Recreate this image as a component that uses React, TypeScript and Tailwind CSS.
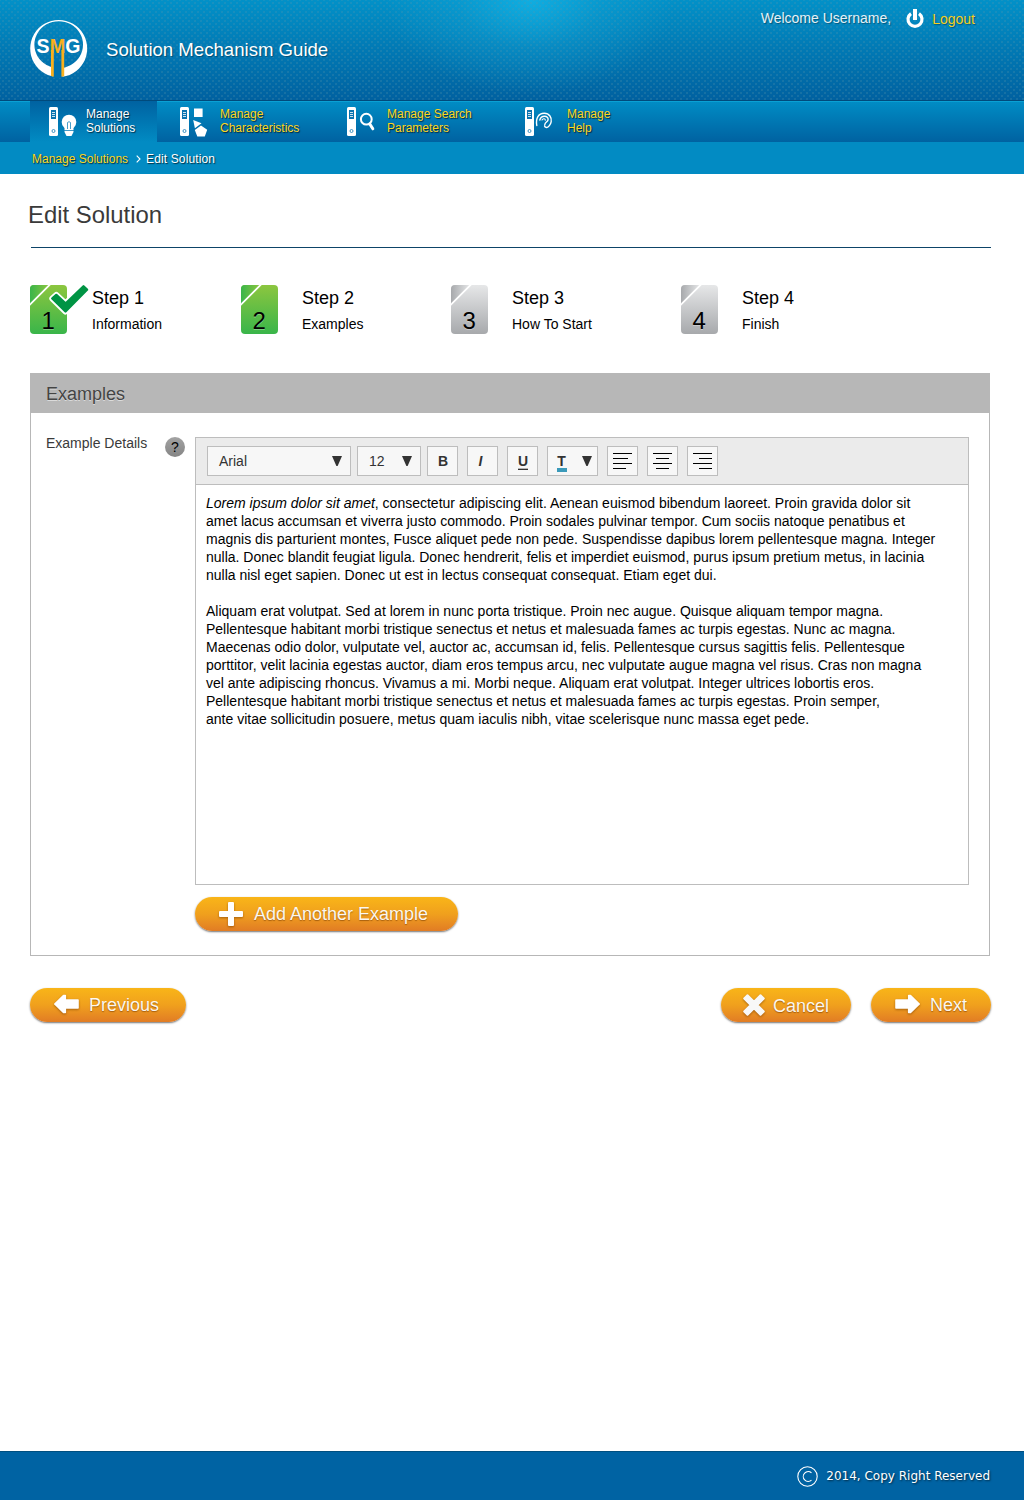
import type { ReactNode } from 'react';

const navShadow = '[text-shadow:1px_1px_1px_rgba(0,0,0,0.65)]';
const softShadow = '[text-shadow:1px_1px_1px_rgba(0,0,0,0.35)]';

function Logo() {
  return (
    <svg width="60" height="60" viewBox="29 19 60 60" className="block shrink-0">
      <path
        fill="#fff"
        fillRule="evenodd"
        d="M58.7 20a28.5 28.500 0 1 0 .01 0ZM58.7 21.2a24.300 23.500 0 1 1-.01 0Z"
      />
      <path fill="#0070ae" d="M53 62h9.500v16H53z" />
      <g fontFamily="Liberation Sans, Arial, sans-serif" fontWeight="700" fontSize="19.5">
        <text x="36.6" y="53.3" fill="#fff">S</text>
        <text x="65.2" y="53.3" fill="#fff">G</text>
        <text x="49.8" y="53.3" fill="#f9b01d" textLength="15.6" lengthAdjust="spacingAndGlyphs">M</text>
      </g>
      <path fill="#f9b01d" d="M51 50h2.800v26.700l-2.800-.6zM61.400 50h2.800v26.200l-2.800.6z" />
    </svg>
  );
}

function Remote() {
  return (
    <>
      <rect x="0" y="0" width="9" height="29" rx="1.5" fill="#fff" />
      <rect x="2" y="3" width="5" height="9" fill="#0a74b0" />
      <path d="M3 5.5h3M3 7.5h3M3 9.5h3" stroke="#fff" strokeWidth="0.8" />
      <circle cx="4.5" cy="24" r="1.5" fill="none" stroke="#2a87bb" strokeWidth="0.9" />
    </>
  );
}

function NavIcon({ children }: { children: ReactNode }) {
  return (
    <svg width="30" height="30" viewBox="0 0 30 30" className="block shrink-0">
      <Remote />
      {children}
    </svg>
  );
}

function NavItem({ icon, lines, className }: { icon: ReactNode; lines: [string, string]; className: string }) {
  return (
    <a className={`flex h-full items-start pt-1.5 text-xs leading-[14px] ${navShadow} ${className}`}>
      {icon}
      <span className="whitespace-nowrap">
        {lines[0]}
        <br />
        {lines[1]}
      </span>
    </a>
  );
}

function StepBadge({ n, active, done }: { n: number; active: boolean; done?: boolean }) {
  const id = `badge${n}`;
  return (
    <svg width="60" height="52" viewBox="0 0 60 52" className="block shrink-0">
      <defs>
        <linearGradient id={id} x1="0" y1="0" x2="0" y2="1">
          <stop offset="0" stopColor={active ? '#8cc63f' : '#e6e7e8'} />
          <stop offset="1" stopColor={active ? '#39b54a' : '#a7a9ac'} />
        </linearGradient>
        <linearGradient id={`${id}c`} x1="0" y1="0" x2="1" y2="0">
          <stop offset="0" stopColor={active ? '#39b54a' : '#a7a9ac'} />
          <stop offset="1" stopColor={active ? '#8cc63f' : '#e6e7e8'} />
        </linearGradient>
      </defs>
      <rect width="37" height="49" rx="4" fill={`url(#${id})`} />
      <path d="M4 0h15L0 19V4a4 4 0 0 1 4-4z" fill={`url(#${id}c)`} />
      <path d="M-1 20.5 20.5-1" stroke="#fff" strokeWidth="1.8" />
      <text x="11.6" y="44.600" fill="#fff" opacity="0.3" fontSize="24" fontFamily="Liberation Sans, Arial, sans-serif">{n}</text>
      <text x="11.6" y="44" fill="#000" fontSize="24" fontFamily="Liberation Sans, Arial, sans-serif">{n}</text>
      {done && (
        <>
          <path
            d="M22.3 13.5 26.3 10 35.5 18.5 53.5 1.3 57 4.7 35.5 26.5z"
            fill="#fff"
            stroke="#fff"
            strokeWidth="6"
            strokeLinejoin="round"
          />
          <path
            d="M22.3 13.5 26.3 10 35.5 18.5 53.5 1.3 57 4.7 35.5 26.5z"
            fill="#009444"
            stroke="#009444"
            strokeWidth="2.4"
            strokeLinejoin="round"
          />
        </>
      )}
    </svg>
  );
}

function Step({ n, label, active, done, className }: { n: number; label: string; active: boolean; done?: boolean; className: string }) {
  return (
    <div className={`flex ${className}`}>
      <StepBadge n={n} active={active} done={done} />
      <div className="ml-[2px] whitespace-nowrap text-black">
        <div className="mt-[3px] text-lg leading-5">Step {n}</div>
        <div className="mt-2 text-sm leading-4">{label}</div>
      </div>
    </div>
  );
}

function Caret() {
  return (
    <svg width="10" height="10" viewBox="0 0 10 10" className="block">
      <path d="M0 0h10L5.600 10H4.400z" fill="#333" />
    </svg>
  );
}

function Tool({ className, children }: { className: string; children: ReactNode }) {
  return (
    <button
      className={`flex h-[30px] items-center border border-[#bdbdbd] bg-[#f7f7f7] text-sm leading-4 text-[#333] ${className}`}
    >
      {children}
    </button>
  );
}

function AlignIcon({ rows }: { rows: [number, number][] }) {
  return (
    <svg width="19" height="16" viewBox="0 0 19 16" className="block" shapeRendering="crispEdges">
      {rows.map(([x, w], i) => (
        <rect key={i} x={x} y={i * 5} width={w} height="1" fill="#000" />
      ))}
    </svg>
  );
}

function PillButton({ icon, label, className, labelClass }: { icon: ReactNode; label: string; className: string; labelClass: string }) {
  return (
    <button
      className={`flex h-[34px] items-start rounded-full bg-linear-to-b from-[#f9b518] via-[#f0a01d] via-50% to-[#e17c24] text-lg leading-5 text-white/95 shadow-[0_1px_2px_rgba(0,0,0,0.55)] ${className}`}
    >
      <span className="drop-shadow-[0_1px_1px_rgba(120,60,0,0.6)]">{icon}</span>
      <span className={`whitespace-nowrap [text-shadow:0_1px_1px_rgba(120,60,0,0.6)] ${labelClass}`}>{label}</span>
    </button>
  );
}

function Arrow({ right }: { right?: boolean }) {
  return (
    <svg width="25" height="20" viewBox="0 0 25 20" className={right ? 'block -scale-x-100' : 'block'}>
      <path
        d="M.8 10 9.500 1.500h1.800v4.500H24v8H11.300V18.500H9.500z"
        fill="#fff"
        stroke="#fff"
        strokeWidth="1.6"
        strokeLinejoin="round"
      />
    </svg>
  );
}

const paragraphOne = [
  'amet lacus accumsan et viverra justo commodo. Proin sodales pulvinar tempor. Cum sociis natoque penatibus et',
  'magnis dis parturient montes, Fusce aliquet pede non pede. Suspendisse dapibus lorem pellentesque magna. Integer',
  'nulla. Donec blandit feugiat ligula. Donec hendrerit, felis et imperdiet euismod, purus ipsum pretium metus, in lacinia',
  'nulla nisl eget sapien. Donec ut est in lectus consequat consequat. Etiam eget dui.',
];

const paragraphTwo = [
  'Aliquam erat volutpat. Sed at lorem in nunc porta tristique. Proin nec augue. Quisque aliquam tempor magna.',
  'Pellentesque habitant morbi tristique senectus et netus et malesuada fames ac turpis egestas. Nunc ac magna.',
  'Maecenas odio dolor, vulputate vel, auctor ac, accumsan id, felis. Pellentesque cursus sagittis felis. Pellentesque',
  'porttitor, velit lacinia egestas auctor, diam eros tempus arcu, nec vulputate augue magna vel risus. Cras non magna',
  'vel ante adipiscing rhoncus. Vivamus a mi. Morbi neque. Aliquam erat volutpat. Integer ultrices lobortis eros.',
  'Pellentesque habitant morbi tristique senectus et netus et malesuada fames ac turpis egestas. Proin semper,',
  'ante vitae sollicitudin posuere, metus quam iaculis nibh, vitae scelerisque nunc massa eget pede.',
];

export default function App() {
  return (
    <div className="flex h-[1500px] w-[1024px] flex-col overflow-hidden bg-white font-['Liberation_Sans',Arial,sans-serif]">
      <header className="flex h-[101px] shrink-0 items-start justify-between border-b border-[#004a7c] bg-[radial-gradient(circle,rgba(90,150,170,0.38)_0.6px,transparent_0.9px),radial-gradient(circle,rgba(90,150,170,0.38)_0.6px,transparent_0.9px),radial-gradient(ellipse_145px_95px_at_530px_0px,rgba(20,180,230,0.8),rgba(20,170,220,0.35)_50%,transparent),linear-gradient(#0291c8,#0061a0)] bg-[size:6px_6px,6px_6px,auto,auto] bg-[position:0_0,3px_3px,0_0,0_0] pl-[29px] pr-[49px]">
        <div className="flex pt-[19px]">
          <Logo />
          <h1 className={`ml-[17px] mt-[21px] whitespace-nowrap text-[18.6px] leading-5 text-white ${softShadow}`}>
            Solution Mechanism Guide
          </h1>
        </div>
        <div className="flex pt-2">
          <span className={`mt-0.5 whitespace-nowrap text-sm leading-4 text-white/90 ${softShadow}`}>Welcome Username,</span>
          <svg width="18" height="20" viewBox="0 0 18 20" className="ml-[15px] mt-px block">
            <path d="M5 4.6A7 7 0 1 0 13 4.600" fill="none" stroke="#fff" strokeWidth="3.2" />
            <path d="M7 0h4v11H7z" fill="#fff" />
          </svg>
          <a className={`ml-2 mt-[3px] text-sm leading-4 text-[#f5cf1d] ${softShadow}`}>Logout</a>
        </div>
      </header>

      <nav className="flex h-[41px] shrink-0 bg-linear-to-b from-[#018dc5] to-[#0062a1] pl-[30px] text-[#fcd61c] shadow-[inset_0_1px_0_#0aa0d4]">
        <NavItem
          className="w-[127px] gap-[7px] bg-linear-to-b from-[#0062a1] to-[#028bc3] pl-[19px] text-white"
          lines={['Manage', 'Solutions']}
          icon={
            <NavIcon>
              <circle cx="20" cy="15" r="7.3" fill="#fff" />
              <path d="M15.5 21h9v4l-2 4h-5l-2-4z" fill="#fff" />
              <path d="M15 23.5h10" stroke="#0f7db8" strokeWidth="0.8" />
              <path d="M18.5 22v-6.5q1.500-1.600 3 0V22" fill="none" stroke="#1c86bd" strokeWidth="0.8" />
            </NavIcon>
          }
        />
        <NavItem
          className="w-[167px] gap-2.5 pl-[23px]"
          lines={['Manage', 'Characteristics']}
          icon={
            <NavIcon>
              <path d="M14 1.500h8.600v8.600H14zM13.200 13l8.300 3.200-6.600 5zM21 18.500l6.200 4.300-2.400 6.700h-7.500L14.800 23z" fill="#fff" />
            </NavIcon>
          }
        />
        <NavItem
          className="w-[178px] gap-2.5 pl-[23px]"
          lines={['Manage Search', 'Parameters']}
          icon={
            <NavIcon>
              <circle cx="19.3" cy="12.2" r="5.4" fill="none" stroke="#fff" strokeWidth="2" />
              <path d="M22.800 17 25.800 21.800" stroke="#fff" strokeWidth="3" strokeLinecap="round" />
            </NavIcon>
          }
        />
        <NavItem
          className="gap-3 pl-[23px]"
          lines={['Manage', 'Help']}
          icon={
            <NavIcon>
              <path
                d="M11.800 18.500C10.500 11 13.500 6.300 19.200 6.300c5.300 0 7.700 4.300 7 8.400-.4 2.600-2.700 5.200-4 5.600-1.300.4-2.300-.2-2.600-1.300M14.800 13c.8-2.500 2.400-3.700 4.600-3.700 2.500 0 3.900 1.500 3.700 3.400-.3 2.300-3.100 2.500-3.300 5"
                fill="none"
                stroke="#fff"
                strokeWidth="1.4"
                strokeLinecap="round"
              />
              <path d="M17 13c1.100-2 3.500-1.500 3.300.3" fill="none" stroke="#fff" strokeWidth="1.1" strokeLinecap="round" />
            </NavIcon>
          }
        />
      </nav>

      <div className={`flex h-8 shrink-0 items-start bg-[#028bc3] pl-8 pt-2.5 text-xs leading-[14px] ${navShadow}`}>
        <a className="whitespace-nowrap text-[#fcd61c]">Manage Solutions</a>
        <svg width="5" height="8" viewBox="0 0 5 8" className="ml-2 mt-[3px] block">
          <path d="M.7.7 4 4 .7 7.3" fill="none" stroke="#fff" strokeWidth="1.1" />
        </svg>
        <span className="ml-[5px] whitespace-nowrap tracking-[0.13px] text-white">Edit Solution</span>
      </div>

      <main className="flex flex-1 flex-col">
        <h2 className="ml-7 mt-[27px] text-[23.9px] leading-7 text-[#3a3a3a]">Edit Solution</h2>
        <div className="ml-[31px] mt-[18px] h-px w-[960px] bg-[#0d4468]" />

        <div className="ml-[30px] mt-[37px] flex h-[52px]">
          <Step n={1} label="Information" active done className="w-[211px]" />
          <Step n={2} label="Examples" active className="w-[210px] [&>div]:ml-px" />
          <Step n={3} label="How To Start" active={false} className="w-[230px] [&>div]:ml-px" />
          <Step n={4} label="Finish" active={false} className="[&>div]:ml-px" />
        </div>

        <section className="ml-[30px] mt-9 h-[583px] w-[960px] border border-[#b7b7b7]">
          <h3 className="h-[39px] bg-[#b7b7b7] pl-[15px] pt-2.5 text-lg leading-5 text-[#444] [text-shadow:0_1px_0_rgba(255,255,255,0.5)]">
            Examples
          </h3>
          <div className="flex pl-[15px] pt-6">
            <label className="w-[119px] whitespace-nowrap text-sm leading-3 text-[#3a3a3a]">Example Details</label>
            <span className="flex size-5 items-center justify-center rounded-full bg-linear-to-b from-[#a3a3a3] to-[#858585] text-sm leading-4 text-black">
              ?
            </span>
            <div className="ml-2.5">
              <div className="h-[448px] w-[774px] border border-[#bdbdbd]">
                <div className="flex h-[47px] items-start gap-[9px] border-b border-[#bdbdbd] bg-[#ebebeb] pl-[11px] pt-2">
                  <div className="flex gap-1.5">
                    <Tool className="w-36 justify-between pl-[11px] pr-2">
                      Arial
                      <Caret />
                    </Tool>
                    <Tool className="w-16 justify-between pl-[11px] pr-2">
                      12
                      <Caret />
                    </Tool>
                    <Tool className="w-[31px] justify-center pl-px font-bold">B</Tool>
                  </div>
                  <Tool className="w-[31px] justify-center pr-1 font-bold italic">I</Tool>
                  <Tool className="w-[31px] justify-center pl-px pt-[2px] font-bold">
                    <span className="h-4 w-2.5 border-b border-[#333] text-center leading-[14px] shadow-[inset_0_-1px_0_#b5b5b5]">U</span>
                  </Tool>
                  <Tool className="w-[51px] justify-between pl-[9px] pr-[5px] font-bold">
                    <span className="mt-1 flex h-[18px] w-2.5 justify-center border-b-4 border-[#3b9aba] pr-px leading-[14px]">T</span>
                    <Caret />
                  </Tool>
                  <Tool className="w-[31px] justify-center">
                    <AlignIcon rows={[[0, 19], [0, 15], [0, 19], [0, 13]]} />
                  </Tool>
                  <Tool className="w-[31px] justify-center">
                    <AlignIcon rows={[[0, 19], [3, 13], [0, 19], [3, 13]]} />
                  </Tool>
                  <Tool className="w-[31px] justify-center">
                    <AlignIcon rows={[[0, 19], [6, 13], [0, 19], [6, 13]]} />
                  </Tool>
                </div>
                <div className="whitespace-nowrap pl-2.5 pt-[9px] text-sm leading-[18px] text-black">
                  <p>
                    <em>Lorem ipsum dolor sit amet</em>, consectetur adipiscing elit. Aenean euismod bibendum laoreet. Proin gravida dolor sit
                    {paragraphOne.map((line) => (
                      <span key={line} className="block">{line}</span>
                    ))}
                  </p>
                  <p className="mt-[18px]">
                    {paragraphTwo.map((line) => (
                      <span key={line} className="block">{line}</span>
                    ))}
                  </p>
                </div>
              </div>
              <PillButton
                className="mt-3 w-[263px] pl-6 pt-[5px]"
                label="Add Another Example"
                labelClass="ml-[11px] mt-[2px]"
                icon={
                  <svg width="24" height="24" viewBox="0 0 24 24" className="block">
                    <rect x="9" width="6" height="24" rx="1" fill="#fff" />
                    <rect y="9" width="24" height="6" rx="1" fill="#fff" />
                  </svg>
                }
              />
            </div>
          </div>
        </section>

        <div className="ml-[30px] mt-8 flex w-[961px]">
          <PillButton className="w-[156px] pl-6 pt-1.5" label="Previous" labelClass="ml-2.5 mt-px" icon={<Arrow />} />
          <PillButton
            className="ml-auto w-[130px] pl-[22px] pt-1.5"
            label="Cancel"
            labelClass="ml-2 mt-[2px]"
            icon={
              <svg width="22" height="22" viewBox="0 0 22 22" className="block">
                <path
                  d="M4.500 1.200 11 7.700 17.500 1.200 20.800 4.500 14.300 11 20.800 17.500 17.500 20.800 11 14.300 4.500 20.800 1.200 17.500 7.700 11 1.200 4.500z"
                  fill="#f8f8f8"
                  stroke="#f8f8f8"
                  strokeWidth="2"
                  strokeLinejoin="round"
                />
              </svg>
            }
          />
          <PillButton className="ml-5 w-[120px] pl-6 pt-1.5" label="Next" labelClass="ml-2.5 mt-px" icon={<Arrow right />} />
        </div>
      </main>

      <footer className="flex h-[49px] shrink-0 items-center justify-end border-t border-[#004f80] bg-[#0063a3] pr-[34px] font-['DejaVu_Sans',sans-serif] text-xs leading-4 text-white [text-shadow:1px_1px_2px_rgba(0,0,0,0.6)]">
        <svg width="21" height="21" viewBox="0 0 21 21" className="mr-[8.3px] block">
          <circle cx="10.5" cy="10.5" r="9.7" fill="none" stroke="#fff" strokeWidth="1.1" />
          <path d="M14.500 6.900A4.900 4.900 0 1 0 14.500 14.100" fill="none" stroke="#fff" strokeWidth="1.1" />
        </svg>
        2014, Copy Right Reserved
      </footer>
    </div>
  );
}
